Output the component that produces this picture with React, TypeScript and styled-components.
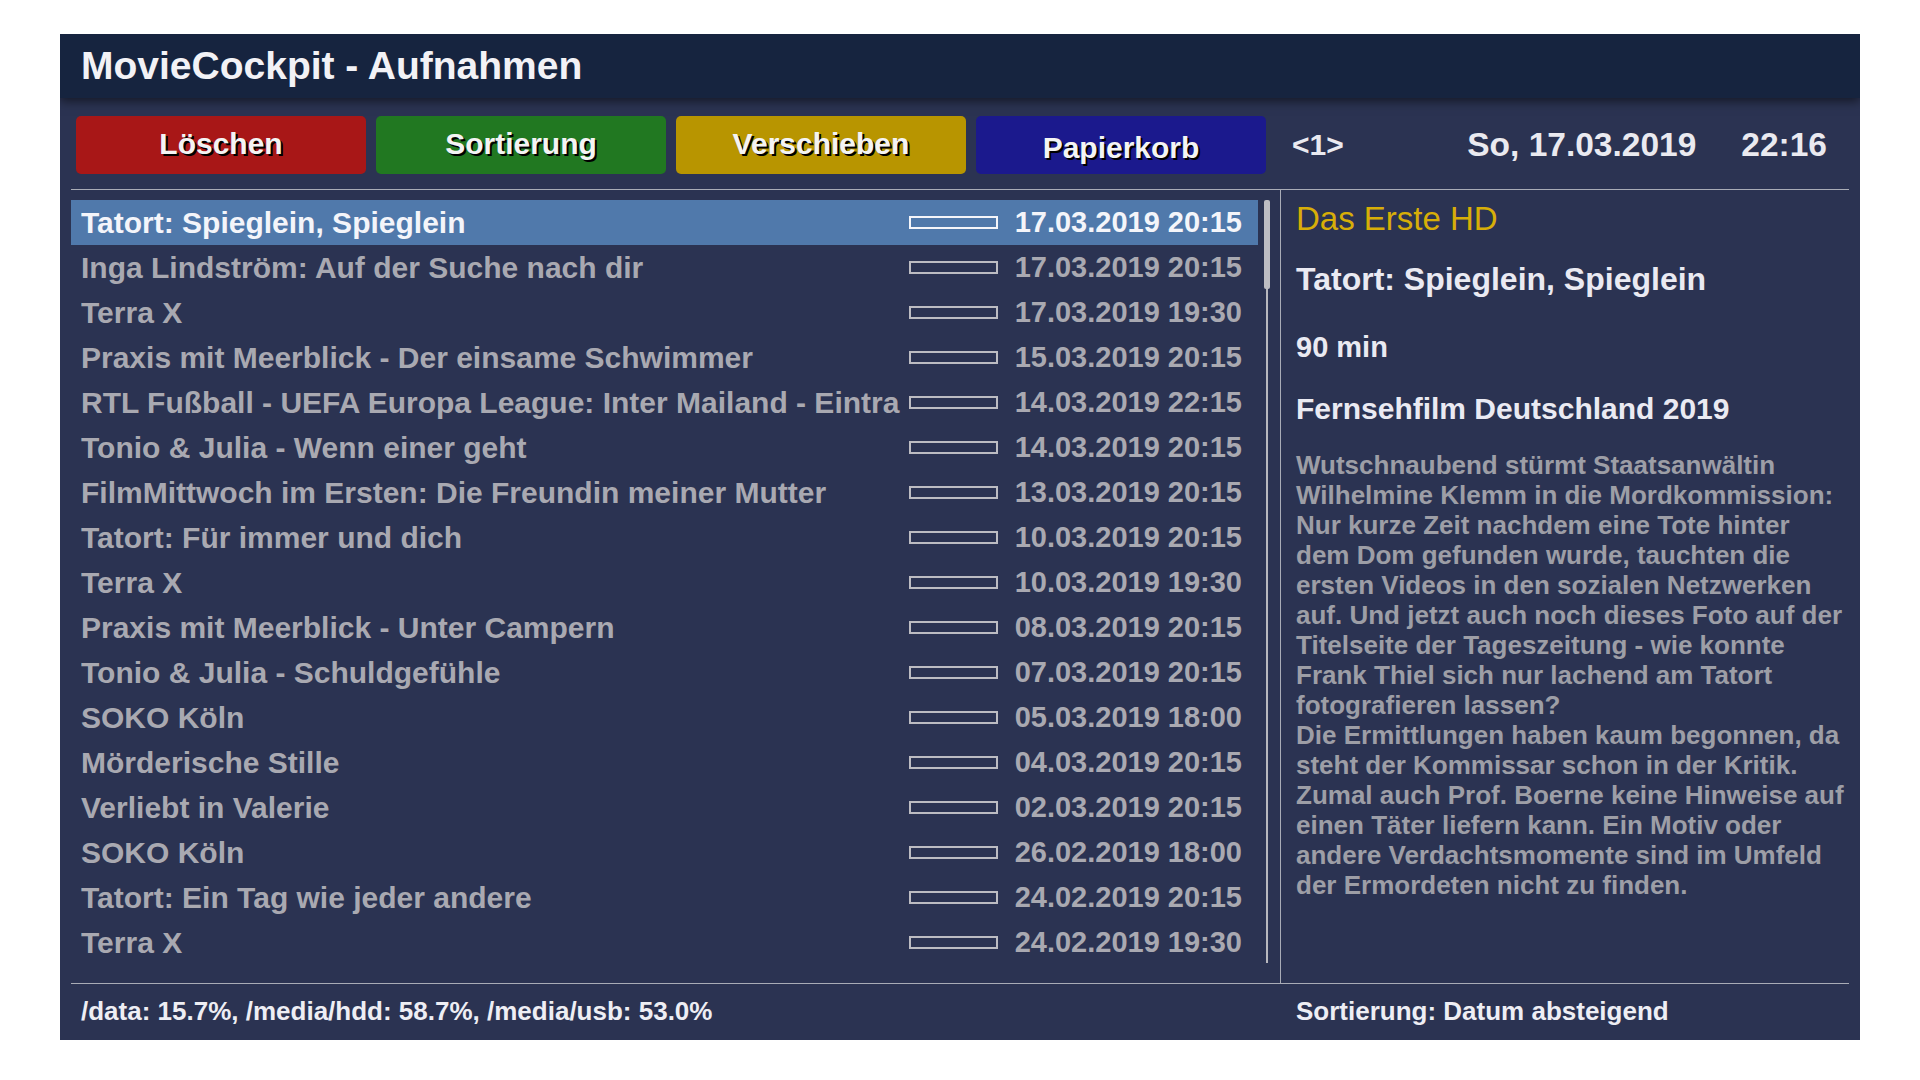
import React from "react";
import styled, { createGlobalStyle } from "styled-components";

const GlobalStyle = createGlobalStyle`
  html, body { margin: 0; padding: 0; background: #ffffff; }
  body { font-family: "Liberation Sans", Arial, sans-serif; }
  * { box-sizing: border-box; }
`;

const Page = styled.div`
  width: 1920px;
  height: 1080px;
  padding: 34px 0 0 60px;
`;

const Panel = styled.div`
  width: 1800px;
  height: 1006px;
  background: #2b3352;
  display: flex;
  flex-direction: column;
  overflow: hidden;
`;

const Header = styled.div`
  height: 64px;
  flex-shrink: 0;
  background: #16243f;
  display: flex;
  align-items: center;
  padding-left: 21px;
  box-shadow: 0 3px 10px rgba(0, 0, 0, 0.55);
  position: relative;
  z-index: 1;
`;

const Title = styled.h1`
  margin: 0;
  font-size: 39px;
  font-weight: 700;
  color: #f2f2f6;
`;

const Toolbar = styled.div`
  height: 92px;
  flex-shrink: 0;
  display: flex;
  align-items: flex-start;
  padding: 18px 22px 0 5px;
  border-bottom: 1px solid #a9acb6;
  margin: 0 11px;
`;

const ColorButton = styled.div<{ $bg: string; $shift?: number }>`
  width: 290px;
  height: 58px;
  margin-right: 10px;
  border-radius: 5px;
  background: ${(p) => p.$bg};
  display: flex;
  align-items: center;
  justify-content: center;
  padding-top: ${(p) => p.$shift ?? 0}px;
  padding-bottom: 2px;
  font-size: 30px;
  font-weight: 700;
  color: #f4f4f4;
  text-shadow: 2px 2px 0 #000;
`;

const PageIndicator = styled.div`
  margin-left: 16px;
  height: 58px;
  display: flex;
  align-items: center;
  font-size: 30px;
  font-weight: 700;
  color: #eaeaf0;
`;

const Clock = styled.div`
  margin-left: auto;
  height: 58px;
  display: flex;
  align-items: center;
  gap: 45px;
  font-size: 33.5px;
  font-weight: 700;
  color: #eaeaf0;
`;

const Content = styled.div`
  display: flex;
  height: 794px;
  flex-shrink: 0;
  margin: 0 11px;
  border-bottom: 1px solid #a9acb6;
`;

const ListColumn = styled.div`
  width: 1210px;
  display: flex;
  padding-top: 10px;
  border-right: 1px solid #a9acb6;
`;

const List = styled.div`
  width: 1187px;
  display: flex;
  flex-direction: column;
`;

const Row = styled.div<{ $selected?: boolean }>`
  height: 45px;
  display: flex;
  align-items: center;
  padding: 0 16px 0 10px;
  background: ${(p) => (p.$selected ? "#5079ab" : "transparent")};
  color: ${(p) => (p.$selected ? "#f4f5fa" : "#a9a9b1")};
  font-weight: 700;
`;

const RowTitle = styled.div`
  width: 824px;
  font-size: 30px;
  white-space: nowrap;
  overflow: hidden;
`;

const Bar = styled.div<{ $selected?: boolean }>`
  width: 89px;
  height: 13px;
  margin-left: 4px;
  border: 2px solid ${(p) => (p.$selected ? "#f4f5fa" : "#bcbcc2")};
`;

const RowDate = styled.div`
  margin-left: auto;
  font-size: 29px;
  white-space: nowrap;
`;

const ScrollTrack = styled.div`
  margin-left: 6px;
  width: 6px;
  height: 763px;
  display: flex;
  flex-direction: column;
  align-items: center;
  background: linear-gradient(#b8b8be, #b8b8be) center / 2px 100% no-repeat;
`;

const ScrollThumb = styled.div`
  width: 6px;
  height: 89px;
  border-radius: 2px;
  background: #bdbdc3;
`;

const Detail = styled.div`
  flex: 1;
  padding: 9px 0 0 15px;
  display: flex;
  flex-direction: column;
`;

const Channel = styled.div`
  font-size: 33px;
  line-height: 40px;
  color: #d7ae08;
`;

const DetailLine = styled.div<{ $gap: number; $size: number }>`
  margin-top: ${(p) => p.$gap}px;
  font-size: ${(p) => p.$size}px;
  line-height: 40px;
  font-weight: 700;
  color: #eaeaf2;
  white-space: nowrap;
`;

const Description = styled.div`
  margin-top: 21px;
  font-size: 26px;
  line-height: 30px;
  font-weight: 700;
  color: #9d9ea6;
`;

const DescLine = styled.div`
  white-space: nowrap;
`;

const Footer = styled.div`
  flex: 1;
  display: flex;
  align-items: center;
  margin: 0 11px;
  font-size: 26px;
  font-weight: 700;
  color: #eeeef4;
  padding-bottom: 2px;
`;

const FooterLeft = styled.div`
  width: 1225px;
  padding-left: 10px;
`;

const rows = [
  ["Tatort: Spieglein, Spieglein", "17.03.2019 20:15"],
  ["Inga Lindström: Auf der Suche nach dir", "17.03.2019 20:15"],
  ["Terra X", "17.03.2019 19:30"],
  ["Praxis mit Meerblick - Der einsame Schwimmer", "15.03.2019 20:15"],
  ["RTL Fußball - UEFA Europa League: Inter Mailand - Eintra", "14.03.2019 22:15"],
  ["Tonio & Julia - Wenn einer geht", "14.03.2019 20:15"],
  ["FilmMittwoch im Ersten: Die Freundin meiner Mutter", "13.03.2019 20:15"],
  ["Tatort: Für immer und dich", "10.03.2019 20:15"],
  ["Terra X", "10.03.2019 19:30"],
  ["Praxis mit Meerblick - Unter Campern", "08.03.2019 20:15"],
  ["Tonio & Julia - Schuldgefühle", "07.03.2019 20:15"],
  ["SOKO Köln", "05.03.2019 18:00"],
  ["Mörderische Stille", "04.03.2019 20:15"],
  ["Verliebt in Valerie", "02.03.2019 20:15"],
  ["SOKO Köln", "26.02.2019 18:00"],
  ["Tatort: Ein Tag wie jeder andere", "24.02.2019 20:15"],
  ["Terra X", "24.02.2019 19:30"],
];

const description = [
  "Wutschnaubend stürmt Staatsanwältin",
  "Wilhelmine Klemm in die Mordkommission:",
  "Nur kurze Zeit nachdem eine Tote hinter",
  "dem Dom gefunden wurde, tauchten die",
  "ersten Videos in den sozialen Netzwerken",
  "auf. Und jetzt auch noch dieses Foto auf der",
  "Titelseite der Tageszeitung - wie konnte",
  "Frank Thiel sich nur lachend am Tatort",
  "fotografieren lassen?",
  "Die Ermittlungen haben kaum begonnen, da",
  "steht der Kommissar schon in der Kritik.",
  "Zumal auch Prof. Boerne keine Hinweise auf",
  "einen Täter liefern kann. Ein Motiv oder",
  "andere Verdachtsmomente sind im Umfeld",
  "der Ermordeten nicht zu finden.",
];

export default function App() {
  return (
    <Page>
      <GlobalStyle />
      <Panel>
        <Header>
          <Title>MovieCockpit - Aufnahmen</Title>
        </Header>
        <Toolbar>
          <ColorButton $bg="#a81717">Löschen</ColorButton>
          <ColorButton $bg="#217821">Sortierung</ColorButton>
          <ColorButton $bg="#b89500">Verschieben</ColorButton>
          <ColorButton $bg="#1b198d" $shift={8}>Papierkorb</ColorButton>
          <PageIndicator>&lt;1&gt;</PageIndicator>
          <Clock>
            <span>So, 17.03.2019</span>
            <span>22:16</span>
          </Clock>
        </Toolbar>
        <Content>
          <ListColumn>
            <List>
              {rows.map(([title, date], i) => (
                <Row key={i} $selected={i === 0}>
                  <RowTitle>{title}</RowTitle>
                  <Bar $selected={i === 0} />
                  <RowDate>{date}</RowDate>
                </Row>
              ))}
            </List>
            <ScrollTrack>
              <ScrollThumb />
            </ScrollTrack>
          </ListColumn>
          <Detail>
            <Channel>Das Erste HD</Channel>
            <DetailLine $gap={20} $size={32}>Tatort: Spieglein, Spieglein</DetailLine>
            <DetailLine $gap={28} $size={29}>90 min</DetailLine>
            <DetailLine $gap={22} $size={30}>Fernsehfilm Deutschland 2019</DetailLine>
            <Description>
              {description.map((l, i) => (
                <DescLine key={i}>{l}</DescLine>
              ))}
            </Description>
          </Detail>
        </Content>
        <Footer>
          <FooterLeft>/data: 15.7%, /media/hdd: 58.7%, /media/usb: 53.0%</FooterLeft>
          <div>Sortierung: Datum absteigend</div>
        </Footer>
      </Panel>
    </Page>
  );
}
